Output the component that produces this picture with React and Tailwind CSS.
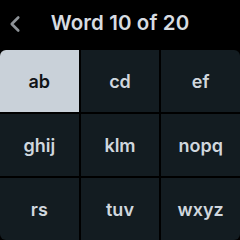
import { ChevronLeft } from "lucide-react";

const cells = ["ab", "cd", "ef", "ghij", "klm", "nopq", "rs", "tuv", "wxyz"];

export default function App() {
    return (
        <div className="w-[240px] h-[240px] bg-black flex flex-col font-['Inter',sans-serif]">
            <div className="h-[50px] relative flex items-center justify-center">
                <ChevronLeft className="absolute left-[2px] top-[11px] text-[#8e9398]" size={26} strokeWidth={2.4} />
                <h1 className="text-[20.5px] font-semibold text-[#d7dce1] tracking-[0.1px] pb-[4px]">Word 10 of 20</h1>
            </div>
            <div className="flex-1 grid grid-cols-3 grid-rows-3 gap-[2px] rounded-[6px] overflow-hidden">
                {cells.map((c, i) => (
                    <div
                        key={c}
                        className={
                            i === 0
                                ? "bg-[#c9d1d9] text-[#101417] flex items-center justify-center text-[18px] font-semibold"
                                : "bg-[#131c21] text-[#d0d7de] flex items-center justify-center text-[18px] font-semibold"
                        }
                    >
                        {c}
                    </div>
                ))}
            </div>
        </div>
    );
}
